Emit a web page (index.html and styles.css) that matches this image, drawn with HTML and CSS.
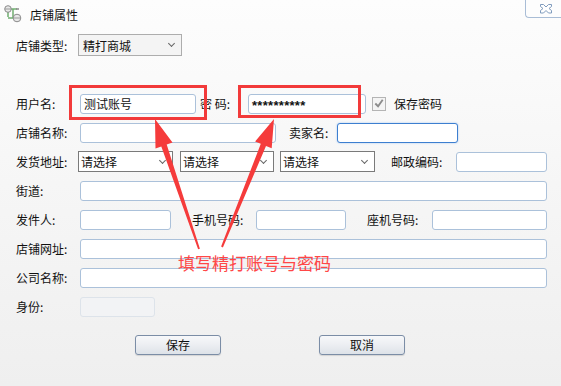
FILE: index.html
```html
<!DOCTYPE html>
<html lang="zh">
<head>
<meta charset="utf-8">
<title>店铺属性</title>
<link rel="stylesheet" href="styles.css">
</head>
<body>
<div class="window">
  <div class="titlebar">
    <div class="title">
      <svg class="title-icon" width="18" height="18" viewBox="0 0 18 18">
        <line x1="4" y1="4" x2="13" y2="4" stroke="#6fae6f" stroke-width="1.5"/>
        <line x1="9" y1="4" x2="9" y2="13" stroke="#6fae6f" stroke-width="1.5"/>
        <line x1="4" y1="7" x2="4" y2="12" stroke="#6fae6f" stroke-width="1.5"/>
        <line x1="4" y1="13" x2="9" y2="13" stroke="#6fae6f" stroke-width="1.5"/>
        <ellipse cx="4" cy="4" rx="3.3" ry="3.3" fill="#e8e8e8" stroke="#8a8a8a"/>
        <line x1="1" y1="4" x2="7" y2="4" stroke="#9a9a9a"/>
        <ellipse cx="13" cy="13" rx="3.8" ry="3.8" fill="#e8e8e8" stroke="#8a8a8a"/>
        <line x1="9.5" y1="13" x2="16.5" y2="13" stroke="#9a9a9a"/>
        <line x1="12" y1="4" x2="15" y2="4" stroke="#8a8a8a" stroke-width="1.5"/>
      </svg>
      <span class="title-text">店铺属性</span>
    </div>
    <div class="close">
      <svg width="14" height="12" viewBox="0 0 14 12">
        <path d="M1.5 1.5h3l2.5 2.5 2.5-2.5h3v2l-2.5 2 2.5 2v2.5h-3l-2.5-2.5-2.5 2.5h-3v-2.5l2.5-2-2.5-2z" fill="#fff" stroke="#7f9bbd" stroke-width="1"/>
      </svg>
    </div>
  </div>

  <div class="form">
    <div class="row row-type">
      <span class="label w62">店铺类型:</span>
      <div class="select s-type"><span>精打商城</span><i class="chev"></i></div>
    </div>

    <div class="row row-user">
      <span class="label w64">用户名:</span>
      <div class="input w116"><span>测试账号</span></div>
      <span class="label ml4 w48">密 码:</span>
      <div class="input w118"><span class="pwd">**********</span></div>
      <div class="checkbox">
        <svg width="13" height="13" viewBox="0 0 13 13">
          <path d="M2.5 6.5l3 3 5-7" fill="none" stroke="#8c8c8c" stroke-width="2"/>
        </svg>
      </div>
      <span class="label ml8">保存密码</span>
    </div>

    <div class="row">
      <span class="label w64">店铺名称:</span>
      <div class="input w196"></div>
      <span class="label ml13 w48">卖家名:</span>
      <div class="input w121 focused"></div>
    </div>

    <div class="row">
      <span class="label w62">发货地址:</span>
      <div class="select w95"><span>请选择</span><i class="chev"></i></div>
      <div class="select w94 ml7"><span>请选择</span><i class="chev"></i></div>
      <div class="select w95 ml6"><span>请选择</span><i class="chev"></i></div>
      <span class="label ml16 w65">邮政编码:</span>
      <div class="input w91"></div>
    </div>

    <div class="row">
      <span class="label w64">街道:</span>
      <div class="input w467"></div>
    </div>

    <div class="row">
      <span class="label w64">发件人:</span>
      <div class="input w91"></div>
      <span class="label ml21 w64">手机号码:</span>
      <div class="input w90"></div>
      <span class="label ml21 w65">座机号码:</span>
      <div class="input w115"></div>
    </div>

    <div class="row">
      <span class="label w64">店铺网址:</span>
      <div class="input w467"></div>
    </div>

    <div class="row">
      <span class="label w64">公司名称:</span>
      <div class="input w467"></div>
    </div>

    <div class="row">
      <span class="label w64">身份:</span>
      <div class="input w75 disabled"></div>
    </div>

    <div class="row row-buttons">
      <button class="btn">保存</button>
      <button class="btn ml98">取消</button>
    </div>
  </div>

  <div class="mark mark-user"></div>
  <div class="mark mark-pwd"></div>
  <svg class="arrows" width="561" height="386" viewBox="0 0 561 386">
    <polygon fill="#f53b3b" points="155,119 172.5,142.6 166.7,144.6 199.9,248.7 198.1,249.3 161.3,146.4 155.5,148.4"/>
    <polygon fill="#f53b3b" points="274,119 271.7,148.3 266,145.9 222.9,247.4 221.1,246.6 260.8,143.8 255.1,141.5"/>
  </svg>
  <div class="note">填写精打账号与密码</div>
</div>
</body>
</html>
```

FILE: styles.css
```css
* { box-sizing: border-box; }
html, body { margin: 0; padding: 0; }
body {
  width: 561px;
  height: 386px;
  overflow: hidden;
  font-family: "Noto Sans CJK SC", "Noto Sans", sans-serif;
  font-size: 12px;
  color: #111;
}
.window {
  position: relative;
  width: 561px;
  height: 386px;
  background: linear-gradient(to bottom, #fdfdfd 0%, #f7f7f7 40%, #efefef 100%);
}
.titlebar {
  height: 28px;
  display: flex;
  justify-content: space-between;
  align-items: flex-start;
}
.title {
  display: flex;
  align-items: center;
  height: 28px;
  padding-left: 4px;
}
.title-icon { margin-right: 8px; }
.title-text { font-size: 12px; }
.close {
  width: 36px;
  height: 18px;
  border-left: 1px solid #a9bdd6;
  border-bottom: 1px solid #a9bdd6;
  border-bottom-left-radius: 4px;
  background: #fdfdfd;
  display: flex;
  align-items: center;
  justify-content: center;
  padding-left: 4px;
}
.form {
  display: flex;
  flex-direction: column;
  gap: 8px;
  padding-left: 16px;
  padding-top: 6px;
}
.row {
  display: flex;
  align-items: center;
  height: 21px;
}
.row-type { height: 22px; margin-bottom: 29px; }
.row-buttons { margin-top: 9px; padding-left: 119px; }
.label { white-space: pre; flex: none; }
.w48 { width: 48px; }
.w62 { width: 62px; }
.w64 { width: 64px; }
.w65 { width: 65px; }
.ml4 { margin-left: 4px; }
.ml6 { margin-left: 6px; }
.ml7 { margin-left: 7px; }
.ml8 { margin-left: 8px; }
.ml13 { margin-left: 13px; }
.ml16 { margin-left: 16px; }
.ml21 { margin-left: 21px; }
.ml98 { margin-left: 98px; }

.input {
  flex: none;
  height: 20px;
  background: #fff;
  border: 1px solid #abc1da;
  border-radius: 3px;
  display: flex;
  align-items: center;
  padding-left: 3px;
}
.input.focused {
  border-color: #3d7fd0;
  box-shadow: 0 0 2px #9ec2ee;
}
.input.disabled {
  background: #f2f3f5;
  border-color: #dde3ea;
}
.pwd {
  font-family: "Liberation Sans", sans-serif;
  font-size: 13px;
  font-weight: bold;
  letter-spacing: 0.3px;
  padding-top: 3px;
}
.w75 { width: 75px; }
.w90 { width: 90px; }
.w91 { width: 91px; }
.w94 { width: 94px; }
.w95 { width: 95px; }
.w115 { width: 115px; }
.w116 { width: 116px; }
.w118 { width: 118px; }
.w121 { width: 121px; }
.w196 { width: 196px; }
.w467 { width: 467px; }

.select {
  flex: none;
  position: relative;
  height: 21px;
  background: #fff;
  border: 1px solid #7a7a7a;
  display: flex;
  align-items: center;
  padding-left: 2px;
}
.s-type {
  width: 104px;
  height: 22px;
  background: #f4f4f4;
  border-color: #adadad;
  padding-left: 4px;
}
.chev {
  position: absolute;
  right: 7px;
  top: 6px;
  width: 5px;
  height: 5px;
  border-right: 1px solid #666;
  border-bottom: 1px solid #666;
  transform: rotate(45deg);
}
.checkbox {
  flex: none;
  width: 14px;
  height: 14px;
  margin-left: 6px;
  border: 1px solid #b4b4b4;
  background: #f4f4f4;
  display: flex;
  align-items: center;
  justify-content: center;
}
.btn {
  flex: none;
  width: 86px;
  height: 20px;
  padding: 0;
  font-family: "Noto Sans CJK SC", sans-serif;
  font-size: 12px;
  color: #111;
  border: 1px solid #7b8da6;
  border-radius: 3px;
  background: linear-gradient(to bottom, #f7f8fa 0%, #eceef2 50%, #dde2e8 100%);
  box-shadow: 0 1px 1px rgba(0,0,0,0.12);
}

.mark {
  position: absolute;
  border: 3px solid #f23a3a;
}
.mark-user { left: 69px; top: 85px; width: 138px; height: 35px; }
.mark-pwd { left: 238px; top: 85px; width: 123px; height: 33px; }
.arrows { position: absolute; left: 0; top: 0; pointer-events: none; }
.note {
  position: absolute;
  left: 178px;
  top: 252px;
  font-size: 17px;
  line-height: 22px;
  color: #ff4747;
  white-space: nowrap;
}
```
